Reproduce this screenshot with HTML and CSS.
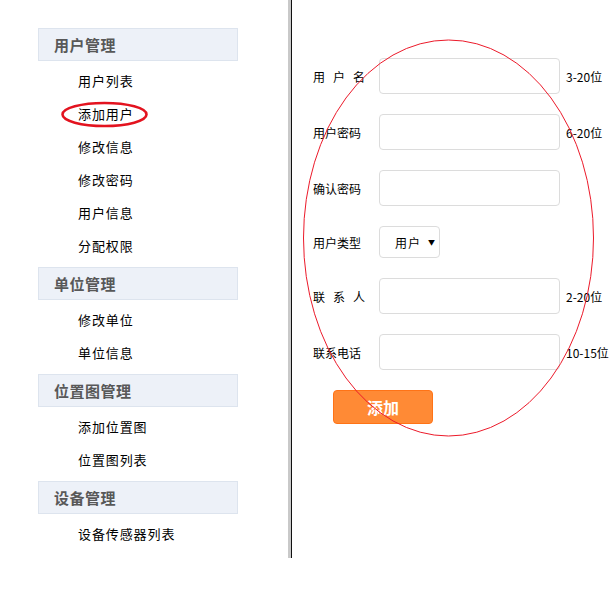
FILE: index.html
```html
<!DOCTYPE html>
<html lang="zh">
<head>
<meta charset="utf-8">
<link rel="stylesheet" href="styles.css">
</head>
<body>
<div class="page">
  <aside class="sidebar">
    <div class="group">
      <div class="group-title">用户管理</div>
      <ul class="items">
        <li>用户列表</li>
        <li>添加用户</li>
        <li>修改信息</li>
        <li>修改密码</li>
        <li>用户信息</li>
        <li>分配权限</li>
      </ul>
    </div>
    <div class="group">
      <div class="group-title">单位管理</div>
      <ul class="items">
        <li>修改单位</li>
        <li>单位信息</li>
      </ul>
    </div>
    <div class="group">
      <div class="group-title">位置图管理</div>
      <ul class="items">
        <li>添加位置图</li>
        <li>位置图列表</li>
      </ul>
    </div>
    <div class="group">
      <div class="group-title">设备管理</div>
      <ul class="items">
        <li>设备传感器列表</li>
      </ul>
    </div>
  </aside>
  <div class="divider"></div>
  <main class="main">
    <form class="form">
      <div class="row">
        <label class="label spaced">用户名</label>
        <input class="input" type="text">
        <span class="hint">3-20位</span>
      </div>
      <div class="row">
        <label class="label">用户密码</label>
        <input class="input" type="password">
        <span class="hint">6-20位</span>
      </div>
      <div class="row">
        <label class="label">确认密码</label>
        <input class="input" type="password">
      </div>
      <div class="row">
        <label class="label">用户类型</label>
        <div class="select"><span>用户</span><span class="arrow">▼</span></div>
      </div>
      <div class="row">
        <label class="label spaced">联系人</label>
        <input class="input" type="text">
        <span class="hint">2-20位</span>
      </div>
      <div class="row">
        <label class="label">联系电话</label>
        <input class="input" type="text">
        <span class="hint">10-15位</span>
      </div>
      <div class="actions">
        <button class="btn" type="button">添加</button>
      </div>
    </form>
  </main>
  <svg class="marks" width="615" height="594" viewBox="0 0 615 594">
    <ellipse cx="104.5" cy="114.5" rx="42" ry="11.5" fill="none" stroke="#e3131f" stroke-width="2.6"/>
    <ellipse cx="448.5" cy="238" rx="145" ry="198" fill="none" stroke="#ec1a2a" stroke-width="1"/>
  </svg>
</div>
</body>
</html>
```
FILE: styles.css
```css
html, body {
  margin: 0;
  padding: 0;
  background: #fff;
}
body {
  font-family: "Noto Sans CJK SC", "Noto Sans", sans-serif;
  color: #000;
}
.page {
  position: relative;
  display: flex;
  width: 615px;
  height: 594px;
}
.sidebar {
  width: 288px;
  box-sizing: border-box;
  padding: 28px 0 0 38px;
}
.group-title {
  width: 200px;
  height: 33px;
  box-sizing: border-box;
  border: 1px solid #dde4ee;
  background: #edf1f8;
  color: #585858;
  font-size: 15px;
  font-weight: bold;
  line-height: 31px;
  padding-left: 15px;
  letter-spacing: 0.5px;
}
.items {
  list-style: none;
  margin: 0;
  padding: 3px 0 5px 0;
}
.items li {
  height: 33px;
  line-height: 33px;
  padding-left: 40px;
  font-size: 13px;
  letter-spacing: 0.9px;
}
.divider {
  width: 3px;
  height: 558px;
  background: #c9c9c9;
  border-right: 1px solid #111;
}
.main {
  flex: 1;
  padding: 58px 0 0 21px;
}
.form {
  display: flex;
  flex-direction: column;
  gap: 20px;
}
.row {
  display: flex;
  align-items: center;
}
.label {
  width: 66px;
  font-size: 12px;
  white-space: nowrap;
}
.label.spaced {
  letter-spacing: 8px;
}
.input {
  width: 181px;
  height: 36px;
  box-sizing: border-box;
  border: 1px solid #dcdcdc;
  border-radius: 4px;
  margin: 0;
  padding: 0 6px;
  background: #fff;
  outline: none;
}
.hint {
  margin-left: 6px;
  font-size: 12px;
  white-space: nowrap;
}
.select {
  display: flex;
  align-items: center;
  width: 61px;
  height: 32px;
  box-sizing: border-box;
  border: 1px solid #dcdcdc;
  border-radius: 4px;
  padding-left: 15px;
  font-size: 12px;
  letter-spacing: 1px;
}
.arrow {
  margin-left: 7px;
  font-size: 7px;
}
.actions {
  padding-left: 20px;
}
.btn {
  width: 100px;
  height: 34px;
  box-sizing: border-box;
  border: 1px solid #ff7316;
  border-radius: 4px;
  background: #ff8a35;
  color: #fff;
  font-family: "Noto Sans CJK SC", sans-serif;
  font-size: 16px;
  font-weight: bold;
  padding: 0;
}
.marks {
  position: absolute;
  left: 0;
  top: 0;
  pointer-events: none;
}
```
